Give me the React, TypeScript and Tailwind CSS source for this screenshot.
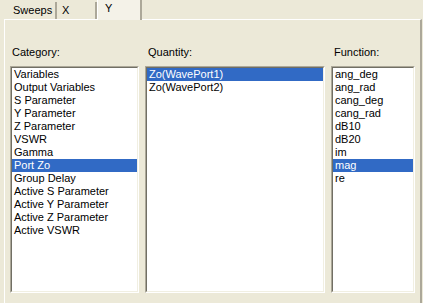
import React from "react";

const categories = [
  "Variables",
  "Output Variables",
  "S Parameter",
  "Y Parameter",
  "Z Parameter",
  "VSWR",
  "Gamma",
  "Port Zo",
  "Group Delay",
  "Active S Parameter",
  "Active Y Parameter",
  "Active Z Parameter",
  "Active VSWR",
];

const quantities = ["Zo(WavePort1)", "Zo(WavePort2)"];

const functions = ["ang_deg", "ang_rad", "cang_deg", "cang_rad", "dB10", "dB20", "im", "mag", "re"];

const ListBox: React.FC<{ items: string[]; selected: string; width: string }> = ({
  items,
  selected,
  width,
}) => (
  <div className={`${width} h-[227px] border border-t-[#ACA899] border-l-[#ACA899] border-r-white border-b-white`}>
    <div className="h-full bg-white border border-t-[#716F64] border-l-[#716F64] border-r-[#F1EFE2] border-b-[#F1EFE2]">
      {items.map((item) => (
        <div
          key={item}
          className={`h-[13px] pl-[2px] whitespace-nowrap ${
            item === selected ? "bg-[#316AC5] text-white" : "text-black"
          }`}
        >
          {item}
        </div>
      ))}
    </div>
  </div>
);

const Tab: React.FC<{ label: string; className: string }> = ({ label, className }) => (
  <div className={`h-[17px] border-r-2 border-r-[#ACA899] ${className}`}>{label}</div>
);

export default function App() {
  return (
    <div className="w-[423px] h-[303px] bg-[#ECE9D8] overflow-hidden font-['Liberation_Sans',Arial,sans-serif] text-[11px] leading-[13px] text-black">
      <div className="flex items-end h-[19px] pl-[6px]">
        <Tab label="Sweeps" className="w-[51px] pl-[7px] pt-[2px]" />
        <Tab label="X" className="w-[40px] pl-[5px] pt-[2px]" />
        <div className="relative z-10 w-[45px] h-[20px] -mb-px pl-[7px] pt-[2px] bg-[#F4F2E8] border-l border-l-white border-r-2 border-r-[#ACA899]">
          Y
        </div>
      </div>
      <div className="ml-[4px] w-[418px] h-[284px] border-t border-l border-t-white border-l-white border-r-2 border-r-[#ACA899] pl-[5px] pt-[26px]">
        <div className="grid grid-cols-[129px_180px_84px] gap-x-[6px]">
          <div className="pl-[2px]">Category:</div>
          <div className="pl-[3px]">Quantity:</div>
          <div className="pl-[3px]">Function:</div>
        </div>
        <div className="grid grid-cols-[129px_180px_84px] gap-x-[6px] mt-[7px]">
          <ListBox items={categories} selected="Port Zo" width="w-[129px]" />
          <ListBox items={quantities} selected="Zo(WavePort1)" width="w-[180px]" />
          <ListBox items={functions} selected="mag" width="w-[84px]" />
        </div>
      </div>
    </div>
  );
}
